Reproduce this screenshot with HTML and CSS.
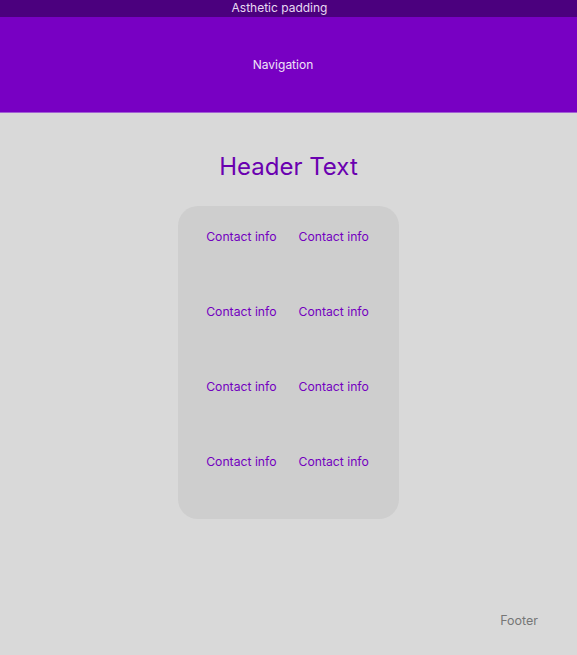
FILE: index.html
```html
<!DOCTYPE html>
<html>
<head>
<meta charset="utf-8">
<link rel="stylesheet" href="styles.css">
</head>
<body>
<div class="page">
  <div class="top-pad">Asthetic padding</div>
  <nav class="nav">Navigation</nav>
  <main class="main">
    <h1 class="header-text">Header Text</h1>
    <div class="card">
      <span class="info">Contact info</span><span class="info">Contact info</span>
      <span class="info">Contact info</span><span class="info">Contact info</span>
      <span class="info">Contact info</span><span class="info">Contact info</span>
      <span class="info">Contact info</span><span class="info">Contact info</span>
    </div>
  </main>
  <footer class="footer">Footer</footer>
</div>
</body>
</html>
```
FILE: styles.css
```css
html, body {
  margin: 0;
  padding: 0;
  background: #d9d9d9;
  font-family: Inter, "Noto Sans", sans-serif;
}
.page {
  display: flex;
  flex-direction: column;
  min-height: 655px;
}
.top-pad {
  height: 17px;
  background: #4b007e;
  color: #e8daf2;
  font-size: 12px;
  line-height: 16px;
  text-align: center;
  padding-right: 18px;
}
.nav {
  height: 96px;
  box-sizing: border-box;
  background: #7800c3;
  border-bottom: 1px solid #a25fd4;
  color: #efe4f7;
  font-size: 12px;
  display: flex;
  align-items: center;
  justify-content: center;
  padding-right: 11px;
}
.main {
  display: flex;
  flex-direction: column;
  align-items: center;
}
.header-text {
  margin: 39px 0 0 0;
  font-size: 24px;
  font-weight: 400;
  line-height: 30px;
  color: #6a00b0;
}
.card {
  margin-top: 24px;
  width: 221px;
  height: 313px;
  box-sizing: border-box;
  background: #cecece;
  border-radius: 20px;
  display: grid;
  grid-template-columns: auto auto;
  grid-auto-rows: 16px;
  column-gap: 22px;
  row-gap: 59px;
  justify-content: center;
  padding-top: 23px;
  padding-right: 2px;
}
.info {
  font-size: 12.2px;
  line-height: 16px;
  color: #7300c0;
  white-space: nowrap;
}
.footer {
  margin-top: auto;
  text-align: right;
  padding: 0 39px 26px 0;
  font-size: 12.5px;
  line-height: 16px;
  color: #767676;
}
```
